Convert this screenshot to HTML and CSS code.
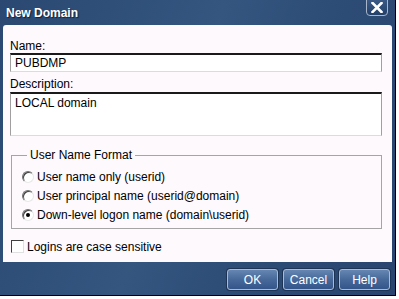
FILE: index.html
```html
<!DOCTYPE html>
<html lang="en">
<head>
    <meta charset="UTF-8">
    <title>New Domain</title>
    <link rel="stylesheet" href="styles.css">
</head>
<body>
    <div class="window">
        <div class="titlebar">
            <span class="title">New Domain</span>
            <button class="close" type="button">
                <svg width="12" height="11" viewBox="0 0 12 11">
                    <path d="M1.5 1 L10.5 10 M10.5 1 L1.5 10" stroke="#fff" stroke-width="2.6" stroke-linecap="square"/>
                </svg>
            </button>
        </div>
        <div class="panel">
            <label class="field-label" for="name">Name:</label>
            <input class="textbox" type="text" id="name" value="PUBDMP">

            <label class="field-label desc" for="description">Description:</label>
            <textarea class="textbox area" id="description">LOCAL domain</textarea>

            <fieldset class="group">
                <legend>User Name Format</legend>
                <div class="option"><span class="radio"></span>User name only (userid)</div>
                <div class="option"><span class="radio"></span>User principal name (userid@domain)</div>
                <div class="option"><span class="radio checked"></span>Down-level logon name (domain\userid)</div>
            </fieldset>

            <div class="option check-row"><span class="check"></span>Logins are case sensitive</div>
        </div>
        <div class="footer">
            <button class="btn" type="button">OK</button>
            <button class="btn" type="button">Cancel</button>
            <button class="btn" type="button">Help</button>
        </div>
    </div>
</body>
</html>
```

FILE: styles.css
```css
body {
    margin: 0;
    background-color: #fff;
    font-family: "Liberation Sans", Arial, sans-serif;
    font-size: 12px;
    line-height: 14px;
    color: #000;
}
.window {
    width: 395px;
    height: 295px;
    border-right: 1px solid #000;
    border-bottom: 1px solid #000;
    background: linear-gradient(110deg, #2a4872 0%, #34567f 45%, #2c4b75 70%, #2a4670 100%);
    display: flex;
    flex-direction: column;
}
.titlebar {
    height: 25px;
    display: flex;
    align-items: flex-start;
    padding-left: 6px;
    box-sizing: border-box;
}
.title {
    color: #fff;
    font-weight: bold;
    font-size: 12px;
    margin-top: 6px;
    text-shadow: 1px 1px 1px #10223c;
}
.close {
    margin-left: auto;
    margin-right: 7px;
    margin-top: -1px;
    width: 22px;
    height: 17px;
    padding: 0;
    border: 1px solid #a7b6cb;
    border-radius: 0 0 4px 4px;
    background: linear-gradient(#3a5a85, #22406a);
    display: flex;
    align-items: center;
    justify-content: center;
}
.panel {
    margin: 0 3px;
    height: 237px;
    box-sizing: border-box;
    padding: 14px 10px 0 7px;
    background-color: #fdf9fd;
    border-radius: 3px 3px 0 0;
}
.field-label {
    display: block;
}
.field-label.desc {
    margin-top: 5px;
}
.textbox {
    display: block;
    width: 372px;
    height: 19px;
    box-sizing: border-box;
    margin: 0;
    padding: 0 4px;
    font-family: inherit;
    font-size: 12px;
    line-height: 14px;
    color: #000;
    background-color: #fff;
    border-style: solid;
    border-width: 2px 1px 1px 1px;
    border-color: #1a1a1a #a0a0a0 #dcdcdc #a0a0a0;
    outline: none;
}
.textbox.area {
    height: 44px;
    margin-top: 1px;
    padding-top: 2px;
    resize: none;
    overflow: hidden;
}
.group {
    margin: 12px 0 0 1px;
    width: 371px;
    box-sizing: border-box;
    padding: 5px 10px 4px 10px;
    border: 1px solid #a5a5a5;
    min-inline-size: 0;
}
.group legend {
    padding: 0 3px;
    margin-left: 5px;
}
.option {
    display: flex;
    align-items: center;
    height: 19px;
}
.radio {
    width: 10px;
    height: 10px;
    border-radius: 50%;
    border: 1px solid;
    border-color: #707070 #e8e8e8 #e8e8e8 #707070;
    box-shadow: inset 1px 1px 0 #404040;
    background-color: #fff;
    margin-right: 3px;
    position: relative;
}
.radio.checked::after {
    content: "";
    position: absolute;
    left: 3px;
    top: 3px;
    width: 4px;
    height: 4px;
    border-radius: 50%;
    background-color: #000;
}
.check-row {
    margin-top: 8px;
    margin-left: 1px;
}
.check {
    width: 11px;
    height: 11px;
    border: 1px solid;
    border-color: #404040 #e0e0e0 #e0e0e0 #404040;
    background-color: #fff;
    margin-right: 3px;
}
.footer {
    height: 33px;
    box-sizing: border-box;
    display: flex;
    justify-content: flex-end;
    gap: 5px;
    padding: 7px 5px 0 0;
}
.btn {
    width: 51px;
    height: 21px;
    padding: 0;
    border: 1px solid #a9bad2;
    border-radius: 3px;
    background: linear-gradient(#6586b2, #47699a 50%, #33558a);
    color: #fff;
    font-family: inherit;
    font-size: 12px;
    box-shadow: 0 0 0 1px #1e3455;
}
```
